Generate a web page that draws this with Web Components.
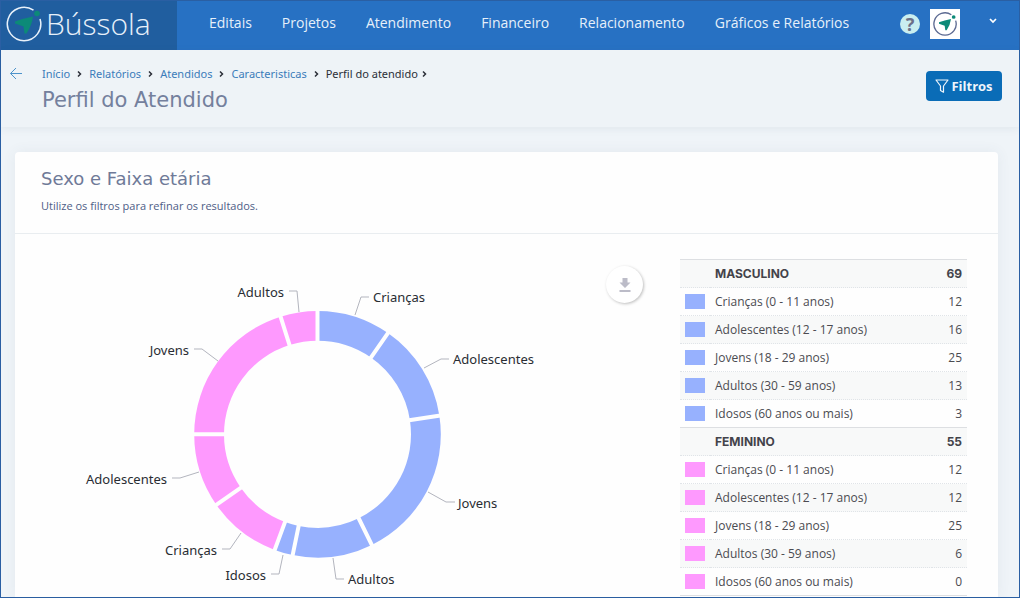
<!DOCTYPE html>
<html lang="pt-BR">
<head>
<meta charset="utf-8">
<meta name="viewport" content="width=device-width, initial-scale=1">
<title>Bússola - Perfil do Atendido</title>
<style>
    body { margin: 0; background: #eff4f8; font-family: "Noto Sans", sans-serif; }
</style>
</head>
<body>
<bussola-app>
    <bussola-topbar slot="topbar"></bussola-topbar>
    <page-header slot="header" heading="Perfil do Atendido"></page-header>
    <report-card heading="Sexo e Faixa etária" description="Utilize os filtros para refinar os resultados.">
        <donut-chart></donut-chart>
        <age-table slot="aside"></age-table>
    </report-card>
</bussola-app>
<script>
(function () {
    'use strict';

    const AGES = ['Crianças (0 - 11 anos)', 'Adolescentes (12 - 17 anos)', 'Jovens (18 - 29 anos)', 'Adultos (30 - 59 anos)', 'Idosos (60 anos ou mais)'];
    const GROUPS = [
        { name: 'MASCULINO', color: '#97b1fe', values: [12, 16, 25, 13, 3] },
        { name: 'FEMININO', color: '#fe99fe', values: [12, 12, 25, 6, 0] }
    ];

    class BussolaApp extends HTMLElement {
        constructor() {
            super();
            this.attachShadow({ mode: 'open' }).innerHTML = `
                <style>
                    :host { display: flex; flex-direction: column; box-sizing: border-box; min-height: 100vh; border: 1px solid #2a5fa3; }
                    main { flex: 1; padding: 25px 21px 0 14px; }
                </style>
                <slot name="topbar"></slot>
                <slot name="header"></slot>
                <main><slot></slot></main>
            `;
        }
    }

    class CompassLogo extends HTMLElement {
        constructor() {
            super();
            this.attachShadow({ mode: 'open' }).innerHTML = `
                <style>
                    :host { display: block; color: #e8f1fa; }
                    svg { display: block; width: 100%; height: 100%; }
                </style>
                <svg viewBox="0 0 36 36" aria-hidden="true">
                    <path d="M27.500 4.200A16.700 16.700 0 1 0 34 13" fill="none" stroke="currentColor" stroke-width="var(--ring, 1.5)"/>
                    <path d="M9 15.500Q17 12.500 27 10.500Q26 19 20.500 27.500H18.500L17.500 20.500L9 17.500Z" fill="#0c8a78"/>
                    <circle cx="31" cy="7.500" r="2.800" fill="#0c8a78"/>
                </svg>
            `;
        }
    }

    class BussolaTopbar extends HTMLElement {
        constructor() {
            super();
            const items = ['Editais', 'Projetos', 'Atendimento', 'Financeiro', 'Relacionamento', 'Gráficos e Relatórios'];
            this.attachShadow({ mode: 'open' }).innerHTML = `
                <style>
                    :host { display: flex; height: 49px; background: #2771c3; color: #e6f0fa; }
                    a { color: inherit; text-decoration: none; }
                    .brand { display: flex; align-items: center; gap: 4px; flex: 0 0 176px; box-sizing: border-box; padding: 0 0 3px 5px; background: #205e9f; font: 300 30px/44px "Open Sans", sans-serif; }
                    .brand compass-logo { width: 36px; height: 36px; }
                    nav { display: flex; align-items: center; gap: 30px; margin-left: 32px; padding-bottom: 6px; font: 14px/20px "Open Sans", sans-serif; white-space: nowrap; }
                    .tools { display: flex; align-items: center; margin-left: auto; padding: 0 22px 3px 0; }
                    button { padding: 0; border: 0; cursor: pointer; }
                    .help { width: 20px; height: 20px; margin-right: 10px; border-radius: 50%; background: #c9eef0; color: #6c7088; font: 700 18px/20px "Noto Sans", sans-serif; }
                    .avatar { width: 30px; height: 30px; background: #fff; padding: 3px; box-sizing: border-box; }
                    .avatar compass-logo { width: 24px; height: 24px; color: #5c6a92; --ring: 2; }
                    .more { display: block; width: 8px; height: 20px; margin-left: 29px; background: none; color: #fff; }
                    .more svg { display: block; margin-bottom: 6px; }
                </style>
                <a class="brand" href="#"><compass-logo></compass-logo><span>Bússola</span></a>
                <nav>${items.map((item) => `<a href="#">${item}</a>`).join('')}</nav>
                <div class="tools">
                    <button class="help" type="button">?</button>
                    <button class="avatar" type="button" aria-label="Perfil"><compass-logo></compass-logo></button>
                    <button class="more" type="button" aria-label="Mais opções"><svg width="8" height="8" viewBox="0 0 8 8"><path d="M1 2L4 5L7 2" fill="none" stroke="currentColor" stroke-width="1.700"/></svg></button>
                </div>
            `;
        }
    }

    class PageHeader extends HTMLElement {
        connectedCallback() {
            const trail = ['Início', 'Relatórios', 'Atendidos', 'Caracteristicas'];
            const chevron = '<svg width="5" height="8" viewBox="0 0 5 8" aria-hidden="true"><path d="M1 1.500L3.500 4L1 6.500" fill="none" stroke="#2b2f38" stroke-width="1.500"/></svg>';
            this.attachShadow({ mode: 'open' }).innerHTML = `
                <style>
                    :host { display: flex; align-items: flex-start; box-sizing: border-box; min-height: 77px; padding: 15px 17px 0 8px; background: #eef3f7; box-shadow: 0 2px 8px rgba(70, 90, 120, .08); }
                    a { color: #3b7cba; text-decoration: none; }
                    .back { flex: 0 0 14px; margin: 2px 19px 0 0; }
                    .back svg { display: block; }
                    .text { flex: 1; }
                    nav { display: flex; align-items: center; gap: 7px; font-size: 11px; line-height: 18px; color: #2b2f38; }
                    .current { display: flex; align-items: center; gap: 4px; }
                    h1 { margin: 0; color: #74809d; font: 400 21px/34px "DejaVu Sans", sans-serif; }
                    .filter { display: flex; align-items: center; justify-content: center; gap: 2px; width: 76px; height: 30px; margin-top: 6px; padding: 0; border: 0; border-radius: 4px; background: #0a6cb7; color: #eef5fb; font: 700 13px/18px "Open Sans", sans-serif; cursor: pointer; }
                </style>
                <a class="back" href="#" aria-label="Voltar"><svg width="14" height="13" viewBox="0 0 14 13"><path d="M13 6.500H1.500M7 1L1.500 6.500L7 12" fill="none" stroke="#4d93cb"/></svg></a>
                <div class="text">
                    <nav aria-label="Trilha">
                        ${trail.map((item) => `<a href="#">${item}</a>${chevron}`).join('')}
                        <span class="current">Perfil do atendido ${chevron}</span>
                    </nav>
                    <h1></h1>
                </div>
                <button class="filter" type="button"><svg width="14" height="14" viewBox="0 0 14 14" aria-hidden="true"><path d="M1 1H13L8.500 7V13.200L5.500 11.500V7Z" fill="none" stroke="currentColor" stroke-width="1.200" stroke-linejoin="round"/></svg>Filtros</button>
            `;
            this.shadowRoot.querySelector('h1').textContent = this.getAttribute('heading');
        }
    }

    class ReportCard extends HTMLElement {
        connectedCallback() {
            this.attachShadow({ mode: 'open' }).innerHTML = `
                <style>
                    :host { display: block; border-radius: 4px 4px 0 0; background: #fefefe; box-shadow: 0 0 14px rgba(70, 90, 120, .07); }
                    header { padding: 15px 26px 18px; border-bottom: 1px solid #e9edf0; }
                    h2 { margin: 0; color: #6f7a98; font: 400 18px/24px "DejaVu Sans", sans-serif; }
                    p { margin: 5px 0 0; color: #4e5d86; font: 11px/19px "Open Sans", sans-serif; }
                    .body { display: flex; justify-content: space-between; padding: 25px 31px 1px 25px; }
                </style>
                <header><h2></h2><p></p></header>
                <div class="body"><slot></slot><slot name="aside"></slot></div>
            `;
            this.shadowRoot.querySelector('h2').textContent = this.getAttribute('heading');
            this.shadowRoot.querySelector('p').textContent = this.getAttribute('description');
        }
    }

    class DonutChart extends HTMLElement {
        constructor() {
            super();
            this.attachShadow({ mode: 'open' }).innerHTML = `
                <style>
                    :host { display: flex; align-items: flex-start; gap: 6px; }
                    svg { display: block; }
                    text { fill: #292d33; font: 13px "Noto Sans", sans-serif; }
                    polyline { fill: none; stroke: #b3b5be; }
                    button { display: grid; place-items: center; width: 37px; height: 37px; margin-top: 7px; padding: 0; border: 0; border-radius: 50%; background: #fff; box-shadow: 1px 1px 3px rgba(0, 0, 0, .25); color: #bcbcc8; cursor: pointer; }
                </style>
                <svg width="560" height="336" viewBox="0 0 560 336" role="img" aria-label="Sexo e Faixa etária">
                    ${this.slices()}
                    ${this.labels()}
                </svg>
                <button type="button" aria-label="Baixar"><svg width="12" height="14" viewBox="0 0 12 14"><path d="M3.500 0h5v4.500h3L6 10 .5 4.500h3zM.5 12h11v2H.5z" fill="currentColor"/></svg></button>
            `;
        }

        slices() {
            const total = GROUPS.flatMap((group) => group.values).reduce((a, b) => a + b, 0);
            const point = (value, r) => {
                const angle = (value / total) * Math.PI * 2;
                return `${(277.5 + r * Math.sin(angle)).toFixed(2)} ${(175.3 - r * Math.cos(angle)).toFixed(2)}`;
            };
            let start = 0;
            let paths = '';
            let gaps = '';
            GROUPS.forEach((group) => group.values.filter((value) => value > 0).forEach((value) => {
                const end = start + value;
                paths += `<path fill="${group.color}" d="M${point(start, 123.3)}A123.3 123.3 0 0 1 ${point(end, 123.3)}L${point(end, 93.5)}A93.5 93.5 0 0 0 ${point(start, 93.5)}Z"/>`;
                gaps += `M${point(start, 91)}L${point(start, 126)}`;
                start = end;
            }));
            return `${paths}<path d="${gaps}" stroke="#fefefe" stroke-width="4"/>`;
        }

        labels() {
            // text, anchor, x, baseline, connector
            return [
                ['Crianças', 'start', 333, 43, '315,56 321,38 329,38'],
                ['Adolescentes', 'start', 413, 105, '384,109 401,100 409,100'],
                ['Jovens', 'start', 418, 249, '388,233 406,243 415,243'],
                ['Adultos', 'start', 308, 325, '293,299 296,320 304,320'],
                ['Idosos', 'end', 226, 321, '243,296 239,315 231,315'],
                ['Crianças', 'end', 177, 296, '201,274 190,290 182,290'],
                ['Adolescentes', 'end', 127, 225, '159,213 140,219 132,219'],
                ['Jovens', 'end', 149, 96, '178,102 162,90 154,90'],
                ['Adultos', 'end', 244, 38, '259,53 257,32 249,32']
            ].map(([text, anchor, x, y, line]) => `<polyline points="${line}"/><text x="${x}" y="${y}" text-anchor="${anchor}">${text}</text>`).join('');
        }
    }

    class AgeTable extends HTMLElement {
        constructor() {
            super();
            this.attachShadow({ mode: 'open' }).innerHTML = `
                <style>
                    :host { display: block; flex: 0 0 287px; }
                    table { width: 100%; border-collapse: collapse; border-bottom: 1px solid #dddfe2; color: #4b4b51; font: 12px/18px "Open Sans", sans-serif; }
                    td, th { box-sizing: border-box; height: 28px; padding: 0 5px; border-top: 1px dotted #e0e4e8; text-align: left; font-weight: 400; }
                    .total td, .total th { border-top: 1px solid #dddfe2; color: #43434a; font-family: Inter, sans-serif; font-weight: 700; }
                    tr:nth-child(odd) { background: #f8f9f9; }
                    td:first-child { width: 20px; }
                    td:last-child { text-align: right; }
                    i { display: block; width: 20px; height: 15px; }
                </style>
                <table><tbody>${GROUPS.map((group) => this.rows(group)).join('')}</tbody></table>
            `;
        }

        rows(group) {
            const sum = group.values.reduce((a, b) => a + b, 0);
            return `<tr class="total"><td></td><th scope="row">${group.name}</th><td>${sum}</td></tr>` +
                group.values.map((value, i) => `<tr><td><i style="background:${group.color}"></i></td><th scope="row">${AGES[i]}</th><td>${value}</td></tr>`).join('');
        }
    }

    customElements.define('compass-logo', CompassLogo);
    customElements.define('bussola-topbar', BussolaTopbar);
    customElements.define('page-header', PageHeader);
    customElements.define('donut-chart', DonutChart);
    customElements.define('age-table', AgeTable);
    customElements.define('report-card', ReportCard);
    customElements.define('bussola-app', BussolaApp);
})();
</script>
</body>
</html>
